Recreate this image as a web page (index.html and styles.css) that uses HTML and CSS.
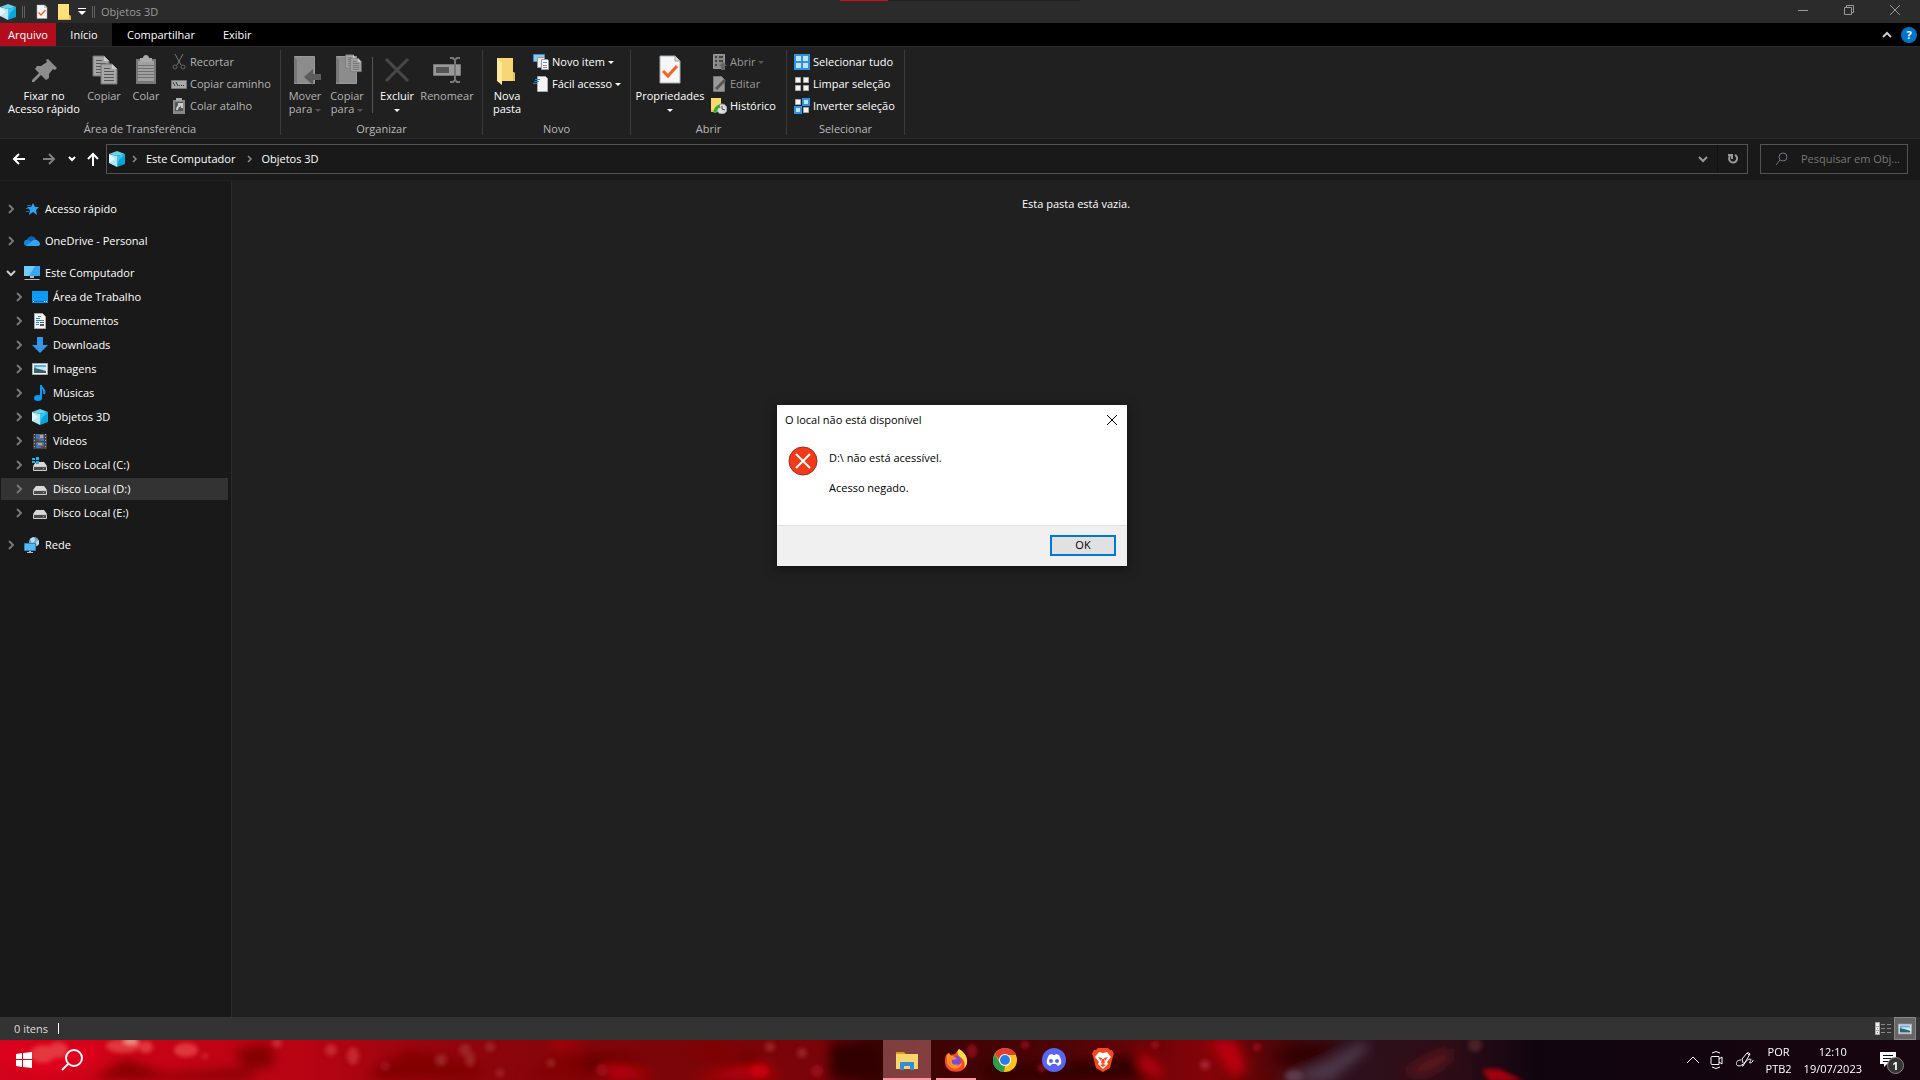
FILE: index.html
```html
<!DOCTYPE html>
<html lang="pt-BR">
<head>
  <meta charset="UTF-8">
  <meta name="viewport" content="width=device-width, initial-scale=1.0">
  <title>Objetos 3D</title>
  <link rel="stylesheet" href="styles.css">
</head>
<body>
  <!-- shared icons -->
  <svg class="defs" aria-hidden="true">
    <symbol id="cube" viewBox="0 0 16 16"><path fill="#b5e8f4" d="M0 3l8 2v11l-8-4z"/><path fill="#e1f7fb" d="M0 3l6 5-6 4z"/><path fill="#67d2ea" d="M0 3l8-3 8 3-8 2z"/><path fill="#0aa5d8" d="M8 5l8-2v10l-8 3z"/><path fill="#36c5f0" d="M8 5l8-2-6 6-2 7z"/></symbol>
    <symbol id="chev" viewBox="0 0 16 16"><path fill="none" stroke="currentColor" stroke-width="2" d="M6 4l4 4-4 4"/></symbol>
    <symbol id="chev-down" viewBox="0 0 16 16"><path fill="none" stroke="currentColor" stroke-width="2" d="M4 6l4 4 4-4"/></symbol>
    <symbol id="page-check" viewBox="0 0 24 32"><path fill="#f5f6f8" stroke="#aaa" d="M2 2h15l5 5v22H2z"/><path fill="#ddd" stroke="#999" d="M17 2v5h5"/><path fill="none" stroke="#f7601f" stroke-width="3" d="M5 17l5 5 9-10"/></symbol>
    <symbol id="folder" viewBox="0 0 20 32"><path fill="#f7d774" d="M1 4h16v14l2 1v8H1z"/><path fill="#ffeaa0" d="M1 4l5 5v22l-5-4z"/><path fill="#e8bf55" d="M17 18l2 1v8h-2z"/></symbol>
    <symbol id="disk" viewBox="0 0 16 16"><path fill="#d9d9dc" d="M4 5h8l3 4H1z"/><path fill="#4a4a4c" stroke="#ccc" d="M1.500 9.500h13v4h-13z"/><path fill="#4be07a" d="M11 11h1v1h-1z"/></symbol>
    <symbol id="picture" viewBox="0 0 16 16"><path fill="#f4f4f4" stroke="#aaa" d="M.5 2.500h15v11H.5z"/><path fill="#5aaef0" d="M2 4h12v4H2z"/><path fill="#c5e5f8" d="M4 6h10v3H4z"/><path fill="#34656b" d="M2 7l5 1 7 2v2H2z"/></symbol>
    <symbol id="sheet" viewBox="0 0 18 22"><path fill="#a6a6a6" stroke="#707070" d="M1 1h11l5 5v15H1z"/><path fill="none" stroke="#555" d="M4 5.500h6M4 8.500h10M4 11.500h10M4 14.500h10M4 17.500h10"/><path fill="#ccc" d="M12 1v5h5z"/></symbol>
  </svg>

  <div class="window">
    <header class="titlebar">
      <svg class="ic16"><use href="#cube"/></svg>
      <i class="bar"></i>
      <button class="quick" aria-label="Propriedades"><svg width="14" height="16"><use href="#page-check"/></svg></button>
      <button class="quick" aria-label="Nova pasta"><svg width="14" height="16" viewBox="0 0 14 16"><path fill="#ffe07c" d="M1 0h11v11l2 1v4H1z"/><path fill="#e5b944" d="M12 11l2 1v4H1v-1h11z"/></svg></button>
      <button class="more" aria-label="Personalizar"><svg width="8" height="8" viewBox="0 0 8 8"><path fill="#fff" d="M0 0h8v1H0zM0 3h8L4 7z"/></svg></button>
      <i class="bar"></i>
      <span class="title">Objetos 3D</span>
      <div class="win-buttons">
        <button aria-label="Minimizar"><svg width="12" height="12"><path d="M1 6.500h10"/></svg></button>
        <button aria-label="Restaurar"><svg width="12" height="12"><path d="M1.500 3.500h7v7h-7zM3.500 3.500v-2h7v7h-2"/></svg></button>
        <button aria-label="Fechar"><svg width="12" height="12"><path d="M1 1l10 10M11 1L1 11"/></svg></button>
      </div>
      <span class="recorder"></span>
    </header>

    <nav class="tabs">
      <button class="tab file">Arquivo</button>
      <button class="tab active">Início</button>
      <button class="tab">Compartilhar</button>
      <button class="tab">Exibir</button>
      <div class="tabs-end">
        <svg width="12" height="8" viewBox="0 0 12 8"><path fill="none" stroke="#ccc" stroke-width="2" d="M2 6l4-4 4 4"/></svg>
        <button class="help" aria-label="Ajuda">?</button>
      </div>
    </nav>

    <div class="ribbon">
      <section class="group clipboard">
        <div class="tools">
          <button class="big"><svg viewBox="0 0 32 32"><path fill="#8c8c8c" d="M20 5l9 9-2 2-2-1-4 5v4l-3 2-5-5-7 7H4v-2l7-7-4-4 2-3h4l6-4-1-2z"/></svg>Fixar no<br>Acesso rápido</button>
          <button class="big dim"><svg viewBox="0 0 32 32"><use href="#sheet" x="4" y="1" width="18" height="22"/><use href="#sheet" x="12" y="9" width="18" height="22"/></svg>Copiar</button>
          <button class="big dim"><svg viewBox="0 0 32 32"><path fill="#777" d="M6 5h20v25H6z"/><path fill="#a0a0a0" d="M8 7h16v20H8z"/><path fill="#aaa" d="M10 4h3c0-4 6-4 6 0h3v4H10z"/><path stroke="#707070" d="M8 11.500h16M8 14.500h16M8 17.500h16M8 20.500h16M8 23.500h16"/></svg>Colar</button>
          <div class="stack">
            <button class="small dim"><svg viewBox="0 0 16 16"><path fill="none" stroke="#777" d="M4 0l6 11M12 0L6 11"/><circle cx="4" cy="13" r="2" fill="none" stroke="#666"/><circle cx="12" cy="13" r="2" fill="none" stroke="#666"/></svg>Recortar</button>
            <button class="small dim"><svg viewBox="0 0 16 16"><path fill="#aaa" stroke="#777" d="M.5 4.500h15v8H.5z"/><path fill="none" stroke="#333" d="M2 6l2 4M5 6l2 4M8 9.500h1M10 9.500h1M12 9.500h1"/></svg>Copiar caminho</button>
            <button class="small dim"><svg viewBox="0 0 16 16"><path fill="#888" d="M2 2h12v14H2z"/><path fill="#aaa" d="M5 0h6v3H5z"/><path fill="#555" d="M4 4h8v9H4z"/><path fill="none" stroke="#ccc" stroke-width="2" d="M6 12c0-3 1-4 4-5M7 6h4v4"/></svg>Colar atalho</button>
          </div>
        </div>
        <h2>Área de Transferência</h2>
      </section>

      <section class="group organize">
        <div class="tools">
          <button class="big dim"><svg viewBox="0 0 32 32"><path fill="#8c8c8c" stroke="#999" d="M5.500 2.500h20v27h-20z"/><path fill="#777" d="M5 3l3 3v24l-3-2z"/><path fill="#5c5c5c" d="M15 23l9-8v5h8v6h-8v5z"/></svg>Mover<br><span>para <i class="caret"></i></span></button>
          <button class="big dim"><svg viewBox="0 0 32 32"><path fill="#8c8c8c" stroke="#999" d="M5.500 2.500h20v27h-20z"/><path fill="#777" d="M5 3l3 3v24l-3-2z"/><use href="#sheet" x="14" y="0" width="12" height="15"/><use href="#sheet" x="19" y="3" width="12" height="16"/></svg>Copiar<br><span>para <i class="caret"></i></span></button>
          <i class="split"></i>
          <button class="big"><svg viewBox="0 0 32 32"><path stroke="#484848" stroke-width="3" d="M5 5l22 22M27 5L5 27"/></svg>Excluir<br><i class="caret"></i></button>
          <button class="big dim"><svg viewBox="0 0 32 32"><path fill="#9a9a9a" stroke="#777" d="M2.500 10.500h27v11h-27z"/><path fill="#555" d="M5 13h13v6H5z"/><path fill="none" stroke="#777" stroke-width="2" d="M19 4h3l2 2 2-2h3M24 5v22M19 28h3l2-2 2 2h3"/></svg>Renomear</button>
        </div>
        <h2>Organizar</h2>
      </section>

      <section class="group new">
        <div class="tools">
          <button class="big"><svg viewBox="0 0 32 32"><use href="#folder" x="5" y="0" width="20" height="32"/></svg>Nova<br>pasta</button>
          <div class="stack">
            <button class="small"><svg viewBox="0 0 16 16"><path fill="#8fc8ef" stroke="#3d8dc9" d="M.5.500h11v7H.5z"/><path fill="#eee" stroke="#999" d="M4.500 3.500h6l2 2v8h-8z"/><path fill="#fff" stroke="#999" d="M8.500 5.500h6l1 1v9h-7z"/><path stroke="#4a9be0" d="M10 8.500h4"/><path stroke="#ee6a55" d="M10 11.500h4"/><path stroke="#4a9be0" d="M10 13.500h4"/></svg>Novo item <i class="caret"></i></button>
            <button class="small"><svg viewBox="0 0 16 16"><path fill="#f4f4f4" stroke="#aaa" d="M4.500.500h8l2 2v13h-10z"/><path stroke="#2389d7" d="M2 3.500h5M1 5.500h5M0 7.500h4"/></svg>Fácil acesso <i class="caret"></i></button>
          </div>
        </div>
        <h2>Novo</h2>
      </section>

      <section class="group open">
        <div class="tools">
          <button class="big"><svg viewBox="0 0 32 32"><use href="#page-check" x="4" y="0" width="24" height="32"/></svg>Propriedades<br><i class="caret"></i></button>
          <div class="stack">
            <button class="small faint"><svg viewBox="0 0 16 16"><path fill="#888" stroke="#999" d="M2.500.500h11v14h-11z"/><path fill="#444" d="M4 2h2v2H4zM8 2h4v2H8zM4 6h2v2H4zM8 6h4v2H8zM4 10h2v2H4z"/><path fill="#666" d="M12 8l4 4h-2v4h-4v-4H8z"/></svg>Abrir <i class="caret"></i></button>
            <button class="small faint"><svg viewBox="0 0 16 16"><path fill="#999" stroke="#777" d="M2.500.500h8l3 3v12h-11z"/><path stroke="#555" stroke-width="3" d="M5 13l9-9"/></svg>Editar</button>
            <button class="small"><svg viewBox="0 0 16 16"><path fill="#f9d968" d="M0 0h10v14H0z"/><path fill="#e7c04d" d="M0 12h10v2H0z"/><circle cx="11" cy="11" r="5" fill="#ddd" stroke="#999"/><path stroke="#444" d="M11 8v3l3 1" fill="none"/><path fill="none" stroke="#32a83e" stroke-width="3" d="M4 15c0-4 1-6 5-7"/></svg>Histórico</button>
          </div>
        </div>
        <h2>Abrir</h2>
      </section>

      <section class="group select">
        <div class="tools">
          <div class="stack">
            <button class="small"><svg viewBox="0 0 16 16"><path fill="#2e92df" d="M0 0h16v16H0z"/><path fill="#bfe3fb" d="M2 2h5v5H2zM9 2h5v5H9zM2 9h5v5H2zM9 9h5v5H9z"/></svg>Selecionar tudo</button>
            <button class="small"><svg viewBox="0 0 16 16"><path fill="#f4f4f4" stroke="#aaa" d="M1.500 1.500h5v5h-5zM9.500 1.500h5v5h-5zM1.500 9.500h5v5h-5zM9.500 9.500h5v5h-5z"/></svg>Limpar seleção</button>
            <button class="small"><svg viewBox="0 0 16 16"><path fill="#f4f4f4" stroke="#aaa" d="M1.500 1.500h5v5h-5zM9.500 9.500h5v5h-5z"/><path fill="#bfe3fb" stroke="#2e92df" stroke-width="2" d="M9 1h6v6H9zM1 9h6v6H1z"/></svg>Inverter seleção</button>
          </div>
        </div>
        <h2>Selecionar</h2>
      </section>
    </div>

    <div class="navigation">
      <button class="nav-btn" aria-label="Voltar"><svg viewBox="0 0 16 16"><path d="M14 8H3M8 3L3 8l5 5"/></svg></button>
      <button class="nav-btn off" aria-label="Avançar"><svg viewBox="0 0 16 16"><path d="M2 8h11M8 3l5 5-5 5"/></svg></button>
      <button class="nav-btn recent" aria-label="Locais recentes"><svg viewBox="0 0 16 16"><path d="M5 6l3 3 3-3"/></svg></button>
      <button class="nav-btn up" aria-label="Acima"><svg viewBox="0 0 16 16"><path d="M8 15V3M3 8l5-5 5 5"/></svg></button>
      <div class="address">
        <svg class="ic16"><use href="#cube"/></svg>
        <svg class="crumb-sep"><use href="#chev"/></svg>
        <a href="#">Este Computador</a>
        <svg class="crumb-sep"><use href="#chev"/></svg>
        <a href="#">Objetos 3D</a>
        <button class="drop" aria-label="Locais anteriores"><svg class="ic16"><use href="#chev-down"/></svg></button>
        <button class="reload" aria-label="Atualizar"><svg class="ic16" viewBox="0 0 16 16"><path fill="none" stroke="currentColor" stroke-width="2" d="M10 4a4 4 0 1 1-5 1M3 4h4v4"/></svg></button>
      </div>
      <label class="search">
        <svg width="14" height="14" viewBox="0 0 14 14"><circle cx="8" cy="5" r="4" fill="none" stroke="#77707f"/><path stroke="#77707f" d="M5 8l-4 5"/></svg>
        <input type="text" placeholder="Pesquisar em Obj..." aria-label="Pesquisar em Objetos 3D">
      </label>
    </div>

    <main class="content">
      <aside class="sidebar">
        <a href="#" class="root"><svg class="arrow"><use href="#chev"/></svg><svg class="ic16" viewBox="0 0 16 16"><path fill="#2ca5f5" d="M9 2l2 4 4 0-3 3 1 5-4-3-4 3 1-5-3-3h4z"/><path stroke="#1673b8" d="M3 4.500h4M2 7.500h3M2 10.500h3"/></svg>Acesso rápido</a>
        <a href="#" class="root"><svg class="arrow"><use href="#chev"/></svg><svg class="ic16" viewBox="0 0 16 16"><path fill="#0a63b8" d="M3 7c1-5 8-5 9 0l-3 4H3z"/><path fill="#1284dc" d="M0 10c0-4 4-4 6-2l3 5H3c-2 0-3-1-3-3z"/><path fill="#35a1f0" d="M2 13l6-5c3-3 8 0 8 3 0 1-1 2-2 2z"/></svg>OneDrive - Personal</a>
        <a href="#" class="root expanded"><svg class="arrow"><use href="#chev-down"/></svg><svg class="ic16" viewBox="0 0 16 16"><path fill="#34a6f5" d="M0 1h16v10H0z"/><path fill="#75c9fb" d="M0 1h11L5 11H0z"/><path fill="#bbb" d="M6 11h4v2H6zM1 14h14l1 1H0z"/></svg>Este Computador</a>
        <a href="#"><svg class="arrow"><use href="#chev"/></svg><svg class="ic16" viewBox="0 0 16 16"><path fill="#0b9af6" d="M0 2h16v12H0z"/><path stroke="#0876c4" d="M0 12.500h16"/><path stroke="#fff" d="M1 12.500h1M12 12.500h1M14 12.500h1"/></svg>Área de Trabalho</a>
        <a href="#"><svg class="arrow"><use href="#chev"/></svg><svg class="ic16" viewBox="0 0 16 16"><path fill="#f5f5f5" stroke="#aaa" d="M2.500.500h8l3 3v12h-11z"/><path stroke="#2787cf" d="M6 3.500h3M4 5.500h4M4 7.500h8M4 9.500h3M4 11.500h3"/><path fill="#555" d="M8 9h4v1H8zM8 11h4v2H8z"/></svg>Documentos</a>
        <a href="#"><svg class="arrow"><use href="#chev"/></svg><svg class="ic16" viewBox="0 0 16 16"><path fill="#3595e8" d="M5 0h6v8h5l-8 8-8-8h5z"/></svg>Downloads</a>
        <a href="#"><svg class="arrow"><use href="#chev"/></svg><svg class="ic16"><use href="#picture"/></svg>Imagens</a>
        <a href="#"><svg class="arrow"><use href="#chev"/></svg><svg class="ic16" viewBox="0 0 16 16"><ellipse cx="6" cy="13" rx="4" ry="3" fill="#0c9af5"/><path fill="none" stroke="#0c9af5" stroke-width="2" d="M9 13V0c0 4 5 4 3 9"/></svg>Músicas</a>
        <a href="#"><svg class="arrow"><use href="#chev"/></svg><svg class="ic16"><use href="#cube"/></svg>Objetos 3D</a>
        <a href="#"><svg class="arrow"><use href="#chev"/></svg><svg class="ic16" viewBox="0 0 16 16"><path fill="#444" d="M1 1h14v15H1z"/><path stroke="#aaa" stroke-dasharray="1 2" d="M2.500 1v15M13.500 1v15"/><path fill="#3777bd" d="M4 1h8v7H4zM4 9h8v6H4z"/><path fill="#f29a38" d="M8 2h3v3H8zM6 10h4v2H6z"/><path fill="#8a3c35" d="M4 6h3v2H4zM9 13h3v2H9z"/></svg>Vídeos</a>
        <a href="#"><svg class="arrow"><use href="#chev"/></svg><svg class="ic16" viewBox="0 0 16 16"><use href="#disk" width="16" height="16"/><path fill="#1bb2e5" d="M0 1h3v2H0zM4 0h3v3H4zM0 4h3v2H0zM4 4h3v3H4z"/></svg>Disco Local (C:)</a>
        <a href="#" class="selected"><svg class="arrow"><use href="#chev"/></svg><svg class="ic16"><use href="#disk"/></svg>Disco Local (D:)</a>
        <a href="#"><svg class="arrow"><use href="#chev"/></svg><svg class="ic16"><use href="#disk"/></svg>Disco Local (E:)</a>
        <a href="#" class="root last"><svg class="arrow"><use href="#chev"/></svg><svg class="ic16" viewBox="0 0 16 16"><circle cx="10" cy="5" r="5" fill="#6eaccd"/><path fill="#c2dce8" d="M6 2l4-2 1 4-3 2zM12 5l3-2v4l-2 2z"/><path fill="#53bafa" stroke="#2885c6" d="M.5 6.500h11v7H.5z"/><path fill="#bbb" d="M5 14h2v1h2v1H3v-1h2z"/></svg>Rede</a>
      </aside>
      <section class="files"><p>Esta pasta está vazia.</p></section>
    </main>

    <footer class="status">
      <span>0 itens</span>
      <i></i>
      <div class="views">
        <button aria-label="Detalhes"><svg width="16" height="14" viewBox="0 0 16 14"><path fill="#eee" stroke="#aaa" d="M.5.500h4v4h-4zM.5 4.500h4v4h-4zM.5 8.500h4v4h-4z"/><path fill="#3b9be0" d="M2 6h1v1H2z"/><path fill="#e04040" d="M2 10h1v1H2z"/><path stroke="#888" d="M6 2.500h4M12 2.500h4M6 6.500h4M12 6.500h4M6 10.500h4M12 10.500h4"/></svg></button>
        <button class="on" aria-label="Miniaturas"><svg width="14" height="14"><use href="#picture"/></svg></button>
      </div>
    </footer>
  </div>

  <div class="taskbar">
    <svg class="wallpaper" viewBox="0 0 1920 40" preserveAspectRatio="none" aria-hidden="true">
      <defs>
        <linearGradient id="base">
          <stop offset="0" stop-color="#d2031c"/><stop offset=".06" stop-color="#ca0317"/><stop offset=".16" stop-color="#b70413"/><stop offset=".24" stop-color="#90050d"/><stop offset=".34" stop-color="#7c0509"/><stop offset=".43" stop-color="#790409"/><stop offset=".46" stop-color="#390303"/><stop offset=".55" stop-color="#4c0306"/><stop offset=".63" stop-color="#850309"/><stop offset=".67" stop-color="#480507"/><stop offset=".7" stop-color="#2f111d"/><stop offset=".76" stop-color="#2b0c16"/><stop offset=".8" stop-color="#10050f"/><stop offset="1" stop-color="#17050f"/>
        </linearGradient>
        <filter id="soft" x="-10%" y="-80%" width="120%" height="260%"><feGaussianBlur stdDeviation="6"/></filter>
        <filter id="spot" x="-10%" y="-80%" width="120%" height="260%"><feGaussianBlur stdDeviation="2"/></filter>
      </defs>
      <path fill="url(#base)" d="M0 0h1920v40H0z"/>
      <g filter="url(#soft)">
        <path fill="#810006" d="M95 38l30-18 40 14 75-5 20 11H95zM235 10l35-7 5 23-30 4zM375 28l35-18 70 15 3 15H370zM525 38l45-25 70 8-50 15zM680 10l35-5 25 5-20 12z"/>
        <path fill="#640402" d="M590 14l30 0 35 15-80 2zM725 28l25-14 25 20-25 6z"/>
        <path fill="#320202" d="M830 2l45 0 15 38h-60zM980 22l60 4 90-10 20 24H990zM1270 18l25-12 45-3-30 25z"/>
        <path fill="#bd000b" d="M545 0h40l-25 8zM600 25l25 0 30 10-40 5zM740 26l20 2 20 10-90 2zM745 28l20-5 10 10-20 5zM1210 0h25l12 30-15 8zM1142 10l18 18 5 12-25-10z"/>
        <path fill="#e0001d" d="M0 5h110L88 25 40 35 0 18z"/>
        <path fill="#4c3849" d="M1275 42l55-22 30-18 10 6-40 34z"/>
        <path fill="#5a151c" d="M1400 33l30-18 20-8 0 15-25 15z"/>
      </g>
      <g filter="url(#spot)">
        <path fill="#a3060f" d="M1482 29l17 0 25 12h-35z"/>
        <g fill="#e64448" opacity=".8"><ellipse cx="43" cy="14" rx="13" ry="9"/><ellipse cx="58" cy="10" rx="10" ry="8"/><ellipse cx="123" cy="6" rx="17" ry="7"/><ellipse cx="146" cy="7" rx="7" ry="6"/><ellipse cx="186" cy="10" rx="12" ry="7"/></g>
        <ellipse cx="131" cy="1" rx="8" ry="4" fill="#ef8b80"/>
        <g fill="#cc3039" opacity=".8"><circle cx="277" cy="3" r="5"/><circle cx="331" cy="10" r="6"/><ellipse cx="353" cy="16" rx="6" ry="9"/><circle cx="205" cy="16" r="3"/></g>
        <g fill="#a12a2d" opacity=".8"><circle cx="441" cy="20" r="6"/><circle cx="465" cy="10" r="6"/><ellipse cx="470" cy="19" rx="5" ry="8"/><circle cx="490" cy="7" r="5"/><circle cx="500" cy="33" r="4"/><circle cx="551" cy="23" r="4"/><circle cx="770" cy="7" r="5"/><circle cx="802" cy="13" r="5"/></g>
        <g fill="#a51524" opacity=".7"><circle cx="385" cy="26" r="5"/><circle cx="602" cy="30" r="6"/><circle cx="817" cy="31" r="6"/><ellipse cx="972" cy="11" rx="5" ry="7"/><circle cx="1025" cy="5" r="4"/><circle cx="1042" cy="28" r="4"/><circle cx="1155" cy="5" r="4"/><circle cx="1257" cy="7" r="4"/></g>
        <ellipse cx="759" cy="31" rx="9" ry="6" fill="#c8000f"/>
        <circle cx="1205" cy="25" r="5" fill="#a52433"/>
        <circle cx="1475" cy="5" r="7" fill="#492428"/>
        <ellipse cx="1294" cy="36" rx="9" ry="6" fill="#5a3a4c"/>
      </g>
    </svg>

    <div class="task-start">
      <button aria-label="Iniciar"><svg width="16" height="16"><path fill="#fff" d="M0 2l6-1v6H0zM7 1l9-1v7H7zM0 8h6v7l-6-1zM7 8h9v8l-9-1z"/></svg></button>
      <button aria-label="Pesquisar"><svg width="24" height="24"><circle cx="14" cy="10" r="8" fill="none" stroke="#fff" stroke-width="2"/><path stroke="#fff" stroke-width="2" d="M8 16l-6 6"/></svg></button>
    </div>

    <div class="apps">
      <button class="app current" aria-label="Explorador"><svg viewBox="0 0 24 24"><path fill="#d99d16" d="M1 4h8l2 2v4H1z"/><path fill="#f9d56b" d="M1 6h22v15H1z"/><path fill="#2f8edb" d="M5 15q0-1 1-1h12q1 0 1 1v7h-4v-4H9v4H5z"/></svg></button>
      <button class="app running" aria-label="Firefox"><svg viewBox="0 0 24 24"><path fill="#f7472c" d="M2 7l2-2 2 2 5-1 4-5c6 4 8 7 8 13 0 13-22 13-22 0 0-3 0-5 1-7z"/><path fill="#ff9924" d="M3 7l2-2 2 3 5 0-2 5 3 5 5-3c-2 9-13 6-15 0z"/><path fill="#ffdb45" d="M15 1c8 5 11 13 5 19 2-6-1-9-5-12-2-2-2-5 0-7z"/><circle cx="12" cy="13" r="5" fill="#8048df"/><path fill="#fa8b25" d="M4 8l7 1 2 2-5 1c-1 5 3 5 7 4-3 4-9 2-11-2z"/></svg></button>
      <button class="app" aria-label="Chrome"><svg viewBox="0 0 24 24"><circle cx="12" cy="12" r="12" fill="#fcc31e"/><path fill="#2e9e4b" d="M2 6l5 9 5 3-1 6C1 23-3 13 2 6z"/><path fill="#df3f32" d="M2 6C7-2 19-2 23 7H12c-3 0-5 3-5 6z"/><circle cx="12" cy="12" r="6" fill="#fff"/><circle cx="12" cy="12" r="5" fill="#287de6"/></svg></button>
      <button class="app" aria-label="Discord"><svg viewBox="0 0 24 24"><circle cx="12" cy="12" r="12" fill="#5865f2"/><path fill="#fff" d="M7 7l3-1 1 1h2l1-1 3 1q3 5 2 9l-3 2-2-2h-4l-2 2-3-2q-1-4 2-9z"/><circle cx="9" cy="13" r="2" fill="#5865f2"/><circle cx="15" cy="13" r="2" fill="#5865f2"/></svg></button>
      <button class="app" aria-label="Brave"><svg viewBox="0 0 24 24"><path fill="#f34b1d" d="M7 0h10l2 2h2l2 4-1 2-3 12-7 4-7-4L2 8 1 6l2-4h2z"/><path fill="#fff" d="M8 4l4 1 4-1 4 5-4 5 1 2-5 5-5-5 1-2-4-5z"/><path fill="#f34b1d" d="M7 9l4 1-1 3zM17 9l-4 1 1 3zM11 11h2l1 4-2 1-2-1zM9 17l3-1 3 1-3 2z"/></svg></button>
    </div>

    <div class="tray">
      <svg class="tray-chev" width="14" height="10"><path fill="none" stroke="#fff" d="M1 8l6-6 6 6"/></svg>
      <svg width="16" height="18"><path fill="none" stroke="#fff" d="M4 5.500h7v8H4q-1 0-1-1v-6q0-1 1-1M11 8l3-2v7l-3-2M4 2q4-3 8 0M4 16q4 3 8 0"/></svg>
      <svg width="18" height="18"><path fill="none" stroke="#fff" d="M7 12l-1-4 5-6q2-1 3 1l-7 12H6M5 9c-6 0-6 6-2 6s8-7 11-7-2 4 0 4 3-2 3-3M11 2l2 2"/></svg>
      <button class="lang">POR<br>PTB2</button>
      <button class="clock">12:10<br>19/07/2023</button>
      <button class="notify" aria-label="Notificações"><svg width="16" height="16"><path fill="#fff" d="M0 0h16v12H7l-3 3v-3H0z"/><path stroke="#15060f" d="M3 3.500h10M3 6.500h10M3 9.500h7"/></svg><b>1</b></button>
    </div>
  </div>

  <div class="dialog" role="alertdialog" aria-labelledby="dialog-title">
    <div class="dialog-title">
      <span id="dialog-title">O local não está disponível</span>
      <button aria-label="Fechar"><svg width="12" height="12"><path stroke="#000" d="M1 1l10 10M11 1L1 11"/></svg></button>
    </div>
    <div class="dialog-body">
      <svg width="30" height="30"><circle cx="15" cy="15" r="14" fill="#f13a17" stroke="#a82a20"/><path stroke="#fff" stroke-width="2" d="M8 8l14 14M22 8L8 22"/></svg>
      <div>
        <p>D:\ não está acessível.</p>
        <p>Acesso negado.</p>
      </div>
    </div>
    <div class="dialog-footer"><button>OK</button></div>
  </div>
</body>
</html>
```
FILE: styles.css
```css
* {
  box-sizing: border-box;
}

body {
  margin: 0;
  height: 100vh;
  display: flex;
  flex-direction: column;
  overflow: hidden;
  background: #202020;
  color: #fff;
  font-family: "Open Sans", "Noto Sans", sans-serif;
  font-size: 11px;
  line-height: 16px;
}

button {
  background: none;
  border: none;
  padding: 0;
  color: inherit;
  font: inherit;
}

a {
  color: inherit;
  text-decoration: none;
}

svg {
  display: block;
  flex-shrink: 0;
}

.defs {
  position: absolute;
  width: 0;
  height: 0;
}

.ic16 {
  width: 16px;
  height: 16px;
}

.window {
  flex: 1;
  min-height: 0;
  display: flex;
  flex-direction: column;
}

/* title bar */
.titlebar {
  position: relative;
  height: 23px;
  display: flex;
  align-items: center;
  background: #2b2b2b;
}

.bar {
  width: 3px;
  height: 12px;
  margin: 0 6px;
  border: solid #606060;
  border-width: 0 1px;
}

.more + .bar {
  margin-left: 3px;
}

.quick {
  width: 22px;
  display: flex;
  justify-content: center;
}

.more {
  width: 14px;
  display: flex;
  justify-content: center;
}

.title {
  color: #9a9a9a;
}

.win-buttons {
  margin-left: auto;
  padding-right: 2px;
  display: flex;
  align-self: flex-start;
}

.win-buttons button {
  width: 46px;
  height: 20px;
  display: flex;
  align-items: center;
  justify-content: center;
}

.win-buttons path {
  fill: none;
  stroke: #999;
}

.recorder {
  position: absolute;
  top: 0;
  left: 50%;
  width: 240px;
  height: 1px;
  margin-left: -120px;
  background: linear-gradient(to right, #d9081e 48px, #202020 48px);
}

/* tabs */
.tabs {
  height: 23px;
  display: flex;
  background: #000;
}

.tab {
  padding: 0 13px 0 15px;
}

.tab.file {
  width: 56px;
  padding: 0;
  background: #b10d1c;
}

.tab.active {
  width: 56px;
  padding: 0;
  background: #202020;
}

.tabs-end {
  margin-left: auto;
  display: flex;
  align-items: center;
  gap: 8px;
  padding-right: 3px;
}

.help {
  width: 16px;
  height: 16px;
  border-radius: 50%;
  background: #0474c8;
  font-weight: bold;
}

/* ribbon */
.ribbon {
  height: 93px;
  padding-top: 3px;
  display: flex;
  border-top: 1px solid #2b2b2b;
  border-bottom: 1px solid #2b2b2b;
}

.group {
  height: 85px;
  display: flex;
  flex-direction: column;
  border-right: 1px solid #3a3a3a;
}

.group h2 {
  margin: 0;
  color: #b9b9b9;
  font-size: 11px;
  font-weight: normal;
  line-height: 12px;
  text-align: center;
}

.tools {
  height: 74px;
  display: grid;
}

.clipboard .tools {
  grid-template-columns: 78px 42px 42px 1fr;
  padding-left: 5px;
  width: 280px;
}

.organize .tools {
  grid-template-columns: 42px 42px 8px 42px 58px;
  padding-left: 3px;
  width: 201px;
}

.new .tools {
  grid-template-columns: 44px 1fr;
  padding-left: 2px;
  width: 147px;
}

.open .tools {
  grid-template-columns: 74px 1fr;
  padding-left: 2px;
  width: 155px;
}

.select .tools {
  padding-left: 3px;
  width: 117px;
}

.big {
  display: block;
  padding-top: 4px;
  line-height: 13px;
  text-align: center;
  white-space: nowrap;
  align-self: start;
}

.big svg {
  width: 32px;
  height: 32px;
  margin: 0 auto 3px;
}

.stack {
  padding: 1px 0 0 4px;
}

.small {
  height: 22px;
  display: flex;
  align-items: center;
  gap: 3px;
  white-space: nowrap;
}

.small svg {
  width: 16px;
  height: 16px;
}

.dim {
  color: #b4b4b4;
}

.faint {
  color: #999;
}

.caret {
  display: inline-block;
  border: 3px solid transparent;
  border-top-color: #fff;
  border-bottom: none;
  vertical-align: middle;
}

.dim .caret,
.faint .caret {
  border-top-color: #555;
}

.split {
  height: 56px;
  margin: 7px 0 0 4px;
  border-left: 1px solid #555;
}

/* navigation */
.navigation {
  height: 42px;
  padding: 0 12px 2px 11px;
  display: flex;
  align-items: center;
  background: #191919;
  border-bottom: 1px solid #202020;
}

.nav-btn svg {
  width: 16px;
  height: 16px;
}

.nav-btn path {
  fill: none;
  stroke: #fff;
  stroke-width: 2;
}

.nav-btn.off {
  margin: 0 7px 0 14px;
}

.nav-btn.off path {
  stroke: #808080;
}

.nav-btn.up {
  margin: 0 5px;
}

.address {
  flex: 1;
  height: 30px;
  display: flex;
  align-items: center;
  padding-left: 2px;
  border: 1px solid #535353;
}

.address a {
  margin-right: 5px;
}

.crumb-sep {
  width: 13px;
  height: 12px;
  margin: 0 5px 0 3px;
  color: #8b8b8b;
}

.drop {
  width: 30px;
  height: 28px;
  margin-left: auto;
  display: flex;
  align-items: center;
  justify-content: center;
  border-right: 1px solid #111;
  color: #999;
}

.reload {
  width: 29px;
  display: flex;
  justify-content: center;
  color: #999;
}

.search {
  width: 148px;
  height: 30px;
  margin-left: 12px;
  padding-left: 14px;
  display: flex;
  align-items: center;
  gap: 12px;
  border: 1px solid #535353;
}

.search input {
  flex: 1;
  min-width: 0;
  padding: 0;
  border: none;
  outline: none;
  background: none;
  color: #fff;
  font: inherit;
}

.search input::placeholder {
  color: #777;
}

/* content */
.content {
  flex: 1;
  min-height: 0;
  display: flex;
}

.sidebar {
  width: 232px;
  padding: 17px 3px 0 1px;
  background: #191919;
  border-right: 1px solid #2b2b2b;
}

.sidebar a {
  height: 22px;
  margin-bottom: 2px;
  padding-left: 10px;
  display: flex;
  align-items: center;
}

.sidebar a.root {
  padding-left: 2px;
  margin-bottom: 10px;
}

.sidebar a.expanded {
  margin-bottom: 2px;
}

.sidebar a.last {
  margin-top: 10px;
}

.sidebar a.selected {
  background: #333;
}

.arrow {
  width: 16px;
  height: 16px;
  color: #777;
}

.expanded .arrow {
  color: #ccc;
}

.sidebar .ic16 {
  margin: 0 5px;
}

.files {
  flex: 1;
  padding-top: 15px;
  text-align: center;
}

.files p {
  margin: 0;
}

/* status bar */
.status {
  height: 23px;
  padding-left: 14px;
  display: flex;
  align-items: center;
  background: #333;
  color: #ddd;
}

.status i {
  width: 1px;
  height: 11px;
  margin-left: 10px;
  background: #fff;
}

.views {
  margin-left: auto;
  padding-right: 4px;
  display: flex;
  align-items: center;
  gap: 3px;
}

.views .on {
  width: 22px;
  height: 23px;
  padding-left: 3px;
  border: 1px solid #888;
  background: #666;
}

/* taskbar */
.taskbar {
  position: relative;
  height: 40px;
  display: flex;
  justify-content: space-between;
  background: #790409;
}

.wallpaper {
  position: absolute;
  top: 0;
  left: 0;
  width: 100%;
  height: 100%;
}

.task-start,
.apps,
.tray {
  position: relative;
  display: flex;
  align-items: center;
}

.task-start,
.tray {
  flex: 1 1 0;
}

.task-start button {
  width: 48px;
  display: flex;
  justify-content: center;
}

.apps {
  gap: 1px;
  padding-left: 90px;
  margin-left: 16px;
}

.app {
  width: 48px;
  height: 40px;
  display: flex;
  align-items: center;
  justify-content: center;
}

.app svg {
  width: 24px;
  height: 24px;
}

.app.current {
  background: rgba(255, 170, 170, 0.36);
  box-shadow: inset 0 -2px #ff96a3;
}

.app.running {
  background: linear-gradient(#ff96a3, #ff96a3) center bottom / 40px 2px no-repeat;
}

.tray {
  justify-content: flex-end;
  gap: 12px;
  padding-right: 16px;
  line-height: 17px;
}

.tray-chev {
  margin-right: -4px;
}

.notify {
  position: relative;
  width: 24px;
  height: 20px;
  margin-left: 6px;
}

.notify b {
  position: absolute;
  left: 7px;
  top: 7px;
  width: 17px;
  height: 17px;
  border: 1px solid #888;
  border-radius: 50%;
  background: #333;
  line-height: 15px;
}

/* error dialog */
.dialog {
  position: absolute;
  top: 405px;
  left: calc(50% - 183px);
  width: 350px;
  background: #fff;
  color: #000;
  box-shadow: 0 3px 10px rgba(0, 0, 0, 0.5);
}

.dialog-title {
  height: 30px;
  padding: 0 9px 0 8px;
  display: flex;
  align-items: center;
  justify-content: space-between;
}

.dialog-body {
  height: 90px;
  padding: 11px 11px 0;
  display: flex;
  gap: 11px;
}

.dialog-body p {
  margin: 4px 0 14px;
}

.dialog-body p + p {
  margin: 0;
}

.dialog-footer {
  height: 41px;
  padding: 0 11px 2px;
  display: flex;
  align-items: center;
  justify-content: flex-end;
  border-top: 1px solid #dfdfdf;
  background: #f0f0f0;
}

.dialog-footer button {
  width: 66px;
  height: 21px;
  border: 2px solid #0078d7;
  background: #e1e1e1;
}
```
